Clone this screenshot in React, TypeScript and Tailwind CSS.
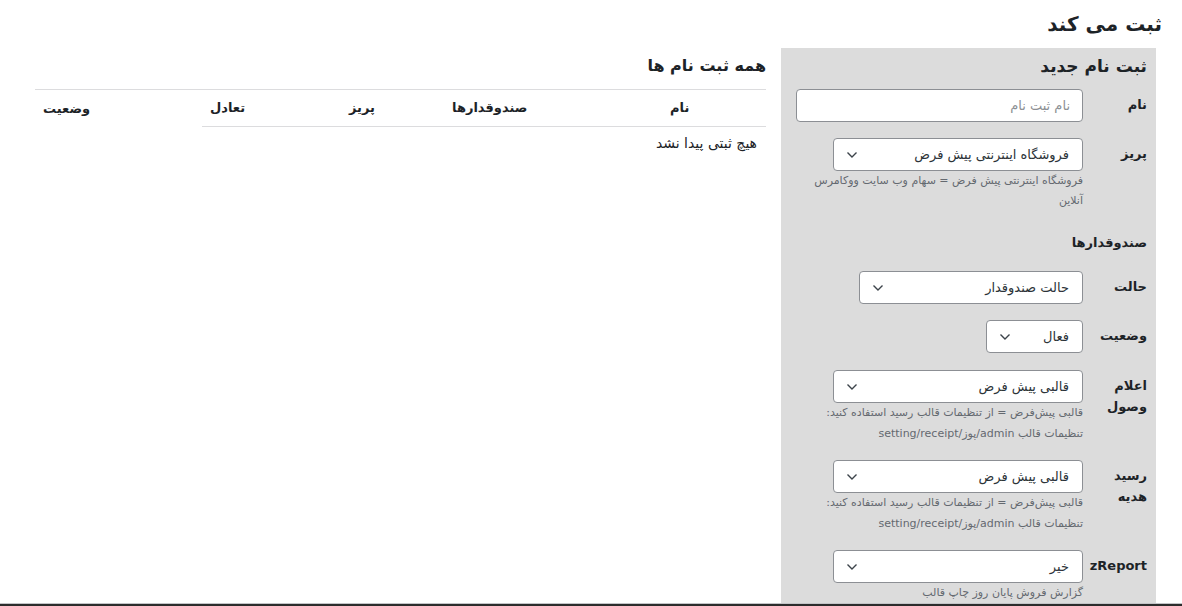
import { ReactNode } from "react";

const font = { fontFamily: '"DejaVu Sans", "Noto Sans", sans-serif' };

function Chevron() {
  return (
    <svg width="12" height="8" viewBox="0 0 12 8" className="shrink-0">
      <polyline points="1.5,1.5 6,6 10.5,1.5" fill="none" stroke="#3c434a" strokeWidth="1.4" />
    </svg>
  );
}

function SelectBox({ value, width }: { value: string; width: string }) {
  return (
    <div
      className={`flex h-[33px] items-center justify-between rounded-[4px] border border-[#8c8f94] bg-white pl-[12px] pr-[13px] text-[13px] text-[#2c3338] ${width}`}
    >
      <span className="leading-none">{value}</span>
      <Chevron />
    </div>
  );
}

function Row({ label, mt, children }: { label: ReactNode; mt: string; children: ReactNode }) {
  return (
    <div className={`flex items-start ${mt}`}>
      <div className="w-[52px] shrink-0 pt-[5px] text-[13px] font-bold leading-[21px] text-[#1d2327]">{label}</div>
      <div className="mr-[12px] w-[287px] shrink-0">{children}</div>
    </div>
  );
}

function Desc({ children }: { children: ReactNode }) {
  return <p className="mt-[-1px] w-[262px] text-[11px] leading-[21px] text-[#646970]">{children}</p>;
}

export default function App() {
  const cols = [
    { label: "نام", w: "w-[104px]" },
    { label: "صندوقدارها", w: "w-[218px]" },
    { label: "پریز", w: "w-[103px]" },
    { label: "تعادل", w: "w-[139px]" },
    { label: "وضعیت", w: "w-[167px]" },
  ];

  return (
    <div dir="rtl" style={font} className="h-[606px] w-[1182px] overflow-hidden bg-white text-[#1d2327]">
      <div className="h-[604px] overflow-hidden border-b border-b-[#c3c4c7]">
        <h1 className="pr-[20px] pt-[9px] text-[20px] font-bold leading-[30px]">ثبت می کند</h1>

        <div className="mt-[9px] flex items-start pl-[35px] pr-[26px]">
          {/* right panel: new register */}
          <section className="h-[560px] w-[375px] shrink-0 bg-[#dcdcdc] pr-[9px]">
            <h2 className="pt-[6px] text-[17px] font-bold leading-[24px]">ثبت نام جدید</h2>

            <Row label="نام" mt="mt-[11px]">
              <div className="flex h-[33px] w-[287px] items-center rounded-[4px] border border-[#8c8f94] bg-white pr-[12px] text-[13px] text-[#8c8f94]">
                نام ثبت نام
              </div>
            </Row>

            <Row label="پریز" mt="mt-[16px]">
              <SelectBox value="فروشگاه اینترنتی پیش فرض" width="w-[250px]" />
              <p className="w-[275px] text-[11px] leading-[20px] text-[#646970]">
                فروشگاه اینترنتی پیش فرض = سهام وب سایت ووکامرس آنلاین
              </p>
            </Row>

            <h3 className="mt-[22px] text-[13px] font-bold leading-[20px]">صندوقدارها</h3>

            <Row label="حالت" mt="mt-[18px]">
              <SelectBox value="حالت صندوقدار" width="w-[224px]" />
            </Row>

            <Row label="وضعیت" mt="mt-[16px]">
              <SelectBox value="فعال" width="w-[97px]" />
            </Row>

            <Row label="اعلام وصول" mt="mt-[17px]">
              <SelectBox value="قالبی پیش فرض" width="w-[250px]" />
              <Desc>
                قالبی پیش‌فرض = از تنظیمات قالب رسید استفاده کنید: تنظیمات قالب admin/پوز/setting/receipt
              </Desc>
            </Row>

            <Row label="رسید هدیه" mt="mt-[16px]">
              <SelectBox value="قالبی پیش فرض" width="w-[250px]" />
              <Desc>
                قالبی پیش‌فرض = از تنظیمات قالب رسید استفاده کنید: تنظیمات قالب admin/پوز/setting/receipt
              </Desc>
            </Row>

            <Row label="zReport" mt="mt-[16px]">
              <SelectBox value="خیر" width="w-[250px]" />
              <p className="text-[11px] leading-[20px] text-[#646970]">گزارش فروش پایان روز چاپ قالب</p>
            </Row>
          </section>

          {/* left: all registers table */}
          <section className="mr-[15px] flex-1">
            <h2 className="pt-[6px] text-[16px] font-bold leading-[24px]">همه ثبت نام ها</h2>
            <div className="mt-[11px] border-t border-[#dcdcde]">
              <div className="flex h-[37px] items-center">
                {cols.map((c) => (
                  <div
                    key={c.label}
                    className={`${c.w} flex h-full items-center justify-end pl-[8px] text-[13px] font-bold ${
                      c.label === "وضعیت" ? "" : "border-b border-[#dcdcde]"
                    }`}
                  >
                    {c.label}
                  </div>
                ))}
              </div>
              <div className="pr-[9px] pt-[6px] text-[14px] leading-[20px]">هیچ ثبتی پیدا نشد</div>
            </div>
          </section>
        </div>
      </div>
      <div className="h-[2px] bg-[#2c2c2c]" />
    </div>
  );
}
